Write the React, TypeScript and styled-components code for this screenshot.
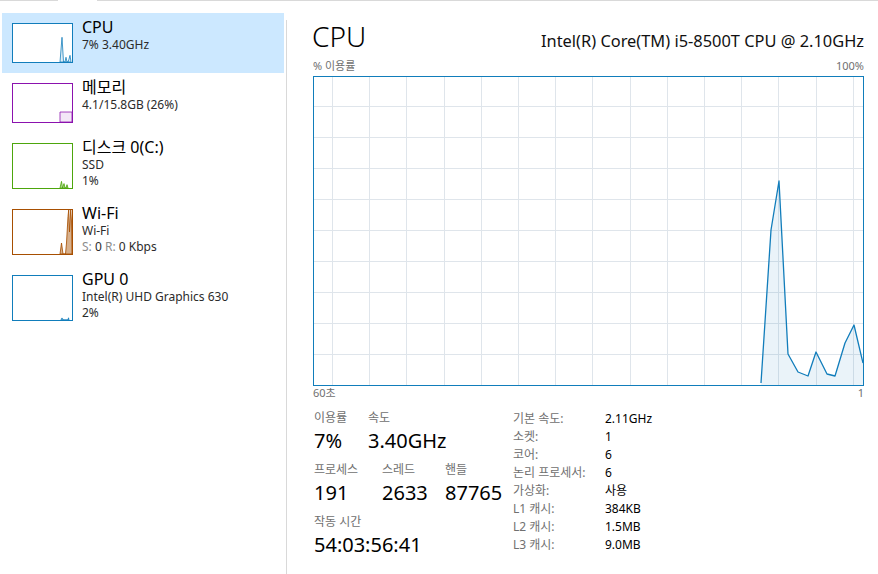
import React from "react";
import styled, { createGlobalStyle } from "styled-components";

const GlobalStyle = createGlobalStyle`
  html, body {
    margin: 0;
    padding: 0;
    background: #fff;
  }
  body {
    font-family: "Noto Sans", "Noto Sans CJK KR", sans-serif;
    color: #000;
  }
`;

const Window = styled.div`
  width: 878px;
  height: 574px;
  display: flex;
  flex-direction: column;
  overflow: hidden;
  background: #fff;
`;

const TabEdge = styled.div`
  display: flex;
  height: 1px;
  flex-shrink: 0;

  &::before {
    content: "";
    width: 58px;
    background: #d9d9d9;
  }
  &::after {
    content: "";
    flex: 1;
    margin-left: 39px;
    background: #d9d9d9;
  }
`;

const Body = styled.div`
  display: flex;
  flex: 1;
  min-height: 0;
`;

const Sidebar = styled.nav`
  width: 282px;
  padding: 12px 0 0 2px;
  display: flex;
  flex-direction: column;
`;

const Item = styled.div<{ $selected: boolean }>`
  display: flex;
  align-items: flex-start;
  gap: 9px;
  padding: 10px 0 10px 10px;
  background: ${({ $selected }) => ($selected ? "#cce8ff" : "transparent")};
`;

const Thumb = styled.div<{ $color: string; $height: number }>`
  width: 61px;
  height: ${({ $height }) => $height}px;
  box-sizing: border-box;
  border: 1px solid ${({ $color }) => $color};
  background: #fff;
  flex-shrink: 0;

  svg {
    display: block;
  }
`;

const Info = styled.div`
  display: flex;
  flex-direction: column;
  margin-top: -5px;
`;

const ItemTitle = styled.div`
  font-size: 16px;
  line-height: 19px;
  color: #000;
`;

const ItemLine = styled.div`
  font-size: 12px;
  line-height: 16px;
  color: #2b2b2b;
`;

const Dim = styled.span`
  color: #8c8c8c;
`;

const Divider = styled.div`
  width: 1px;
  margin: 19px 0 0 2px;
  background: #d9d9d9;
`;

const Content = styled.main`
  flex: 1;
  padding: 18px 14px 0 26px;
  display: flex;
  flex-direction: column;
`;

const Header = styled.div`
  display: flex;
  justify-content: space-between;
  align-items: baseline;
  height: 34px;
`;

const Heading = styled.h1`
  margin: 0 0 0 -1px;
  font-size: 28px;
  line-height: 34px;
  font-weight: 300;
`;

const Model = styled.div`
  font-size: 16.4px;
  line-height: 20px;
  color: #111;
`;

const AxisRow = styled.div<{ $gap: number }>`
  display: flex;
  justify-content: space-between;
  margin-top: ${({ $gap }) => $gap}px;
  font-size: 11px;
  line-height: 14px;
  color: #707070;
`;

const GraphBox = styled.div`
  width: 551px;
  height: 310px;
  box-sizing: border-box;
  margin-top: 3px;
  border: 1px solid #117dbb;
  background: #fff;

  svg {
    display: block;
  }
`;

const Stats = styled.div`
  display: flex;
  margin-top: 10px;
`;

const StatBlock = styled.div`
  width: 199px;
  padding-left: 1px;
  display: flex;
  flex-direction: column;
  gap: 8px;
`;

const StatRow = styled.div`
  display: flex;
`;

const Stat = styled.div<{ $width?: number }>`
  display: flex;
  flex-direction: column;
  gap: 2px;
  width: ${({ $width }) => ($width ? `${$width}px` : "auto")};
  white-space: nowrap;
`;

const StatLabel = styled.div`
  font-size: 12px;
  line-height: 16px;
  color: #707070;
`;

const StatValue = styled.div`
  font-size: 20px;
  line-height: 26px;
  color: #000;
`;

const DetailTable = styled.div`
  display: grid;
  grid-template-columns: 92px auto;
  grid-auto-rows: 18px;
  align-content: start;
  font-size: 12px;
  line-height: 18px;
`;

const DetailKey = styled.div`
  color: #707070;
`;

const DetailValue = styled.div`
  color: #000;
`;

type Metric = {
  title: string;
  lines: React.ReactNode[];
  color: string;
  fill: string;
  points: string;
  selected?: boolean;
};

const metrics: Metric[] = [
  {
    title: "CPU",
    lines: ["7% 3.40GHz"],
    color: "#117dbb",
    fill: "rgba(17,125,187,0.12)",
    points: "47,40 49,14 50.5,40 52,40 53,35 54,40 55,40 56,37 57,33 58,40",
    selected: true,
  },
  {
    title: "메모리",
    lines: ["4.1/15.8GB (26%)"],
    color: "#8b12ae",
    fill: "rgba(139,18,174,0.1)",
    points: "47,40 47,29.5 59,29.5 59,40",
  },
  {
    title: "디스크 0(C:)",
    lines: ["SSD", "1%"],
    color: "#4da60c",
    fill: "rgba(77,166,12,0.35)",
    points: "47,40 48.5,34 49.5,40 51,36 52,40 53,40 54,37 55,40",
  },
  {
    title: "Wi-Fi",
    lines: [
      "Wi-Fi",
      <>
        <Dim>S:</Dim> 0 <Dim>R:</Dim> 0 Kbps
      </>,
    ],
    color: "#a74f01",
    fill: "rgba(167,79,1,0.45)",
    points:
      "47,40 48.5,30 50,40 52.5,40 53.5,30 55,6 55.7,0 56.5,20 57.7,0 58.5,10 59,40",
  },
  {
    title: "GPU 0",
    lines: ["Intel(R) UHD Graphics 630", "2%"],
    color: "#117dbb",
    fill: "rgba(17,125,187,0.2)",
    points: "48,40 48.5,38.5 49.5,38.5 50,40 55,40 55.5,38 56,40",
  },
];

const usage = [
  [447, 306],
  [457, 153],
  [465, 104],
  [474, 277],
  [484, 295],
  [494, 299],
  [502, 275],
  [513, 297],
  [521, 299],
  [531, 266],
  [540, 248],
  [549, 286],
];

const details: [string, string][] = [
  ["기본 속도:", "2.11GHz"],
  ["소켓:", "1"],
  ["코어:", "6"],
  ["논리 프로세서:", "6"],
  ["가상화:", "사용"],
  ["L1 캐시:", "384KB"],
  ["L2 캐시:", "1.5MB"],
  ["L3 캐시:", "9.0MB"],
];

const INNER_W = 549;
const INNER_H = 308;

function UsageGraph() {
  const cols = Array.from({ length: 15 }, (_, i) => Math.round(18 + i * 37.2) + 0.5);
  const rows = Array.from({ length: 9 }, (_, i) => Math.round(29 + i * 31) + 0.5);
  const line = usage.map(([x, y]) => `${x},${y}`).join(" ");
  const area = `447,${INNER_H} ${line} ${INNER_W},${INNER_H}`;
  return (
    <svg width={INNER_W} height={INNER_H}>
      {cols.map((x) => (
        <line key={"c" + x} x1={x} x2={x} y1={0} y2={INNER_H} stroke="#dfe5eb" strokeWidth={1} />
      ))}
      {rows.map((y) => (
        <line key={"r" + y} x1={0} x2={INNER_W} y1={y} y2={y} stroke="#dfe5eb" strokeWidth={1} />
      ))}
      <polygon points={area} fill="rgba(17,125,187,0.09)" />
      <polyline points={line} fill="none" stroke="#117dbb" strokeWidth={1.3} strokeLinejoin="round" />
    </svg>
  );
}

export default function App() {
  return (
    <Window>
      <GlobalStyle />
      <TabEdge />
      <Body>
        <Sidebar>
          {metrics.map((m) => (
            <Item key={m.title} $selected={!!m.selected}>
              <Thumb $color={m.color} $height={m.lines.length > 1 ? 46 : 40}>
                <svg viewBox="0 0 59 40" preserveAspectRatio="none" width="100%" height="100%">
                  <polygon points={m.points} fill={m.fill} stroke={m.color} strokeWidth={0.8} />
                </svg>
              </Thumb>
              <Info>
                <ItemTitle>{m.title}</ItemTitle>
                {m.lines.map((l, i) => (
                  <ItemLine key={i}>{l}</ItemLine>
                ))}
              </Info>
            </Item>
          ))}
        </Sidebar>
        <Divider />
        <Content>
          <Header>
            <Heading>CPU</Heading>
            <Model>Intel(R) Core(TM) i5-8500T CPU @ 2.10GHz</Model>
          </Header>
          <AxisRow $gap={6}>
            <span>% 이용률</span>
            <span>100%</span>
          </AxisRow>
          <GraphBox>
            <UsageGraph />
          </GraphBox>
          <AxisRow $gap={0}>
            <span>60초</span>
            <span>1</span>
          </AxisRow>
          <Stats>
            <StatBlock>
              <StatRow>
                <Stat $width={54}>
                  <StatLabel>이용률</StatLabel>
                  <StatValue>7%</StatValue>
                </Stat>
                <Stat>
                  <StatLabel>속도</StatLabel>
                  <StatValue>3.40GHz</StatValue>
                </Stat>
              </StatRow>
              <StatRow>
                <Stat $width={68}>
                  <StatLabel>프로세스</StatLabel>
                  <StatValue>191</StatValue>
                </Stat>
                <Stat $width={63}>
                  <StatLabel>스레드</StatLabel>
                  <StatValue>2633</StatValue>
                </Stat>
                <Stat>
                  <StatLabel>핸들</StatLabel>
                  <StatValue>87765</StatValue>
                </Stat>
              </StatRow>
              <StatRow>
                <Stat>
                  <StatLabel>작동 시간</StatLabel>
                  <StatValue>54:03:56:41</StatValue>
                </Stat>
              </StatRow>
            </StatBlock>
            <DetailTable>
              {details.map(([k, v]) => (
                <React.Fragment key={k}>
                  <DetailKey>{k}</DetailKey>
                  <DetailValue>{v}</DetailValue>
                </React.Fragment>
              ))}
            </DetailTable>
          </Stats>
        </Content>
      </Body>
    </Window>
  );
}
